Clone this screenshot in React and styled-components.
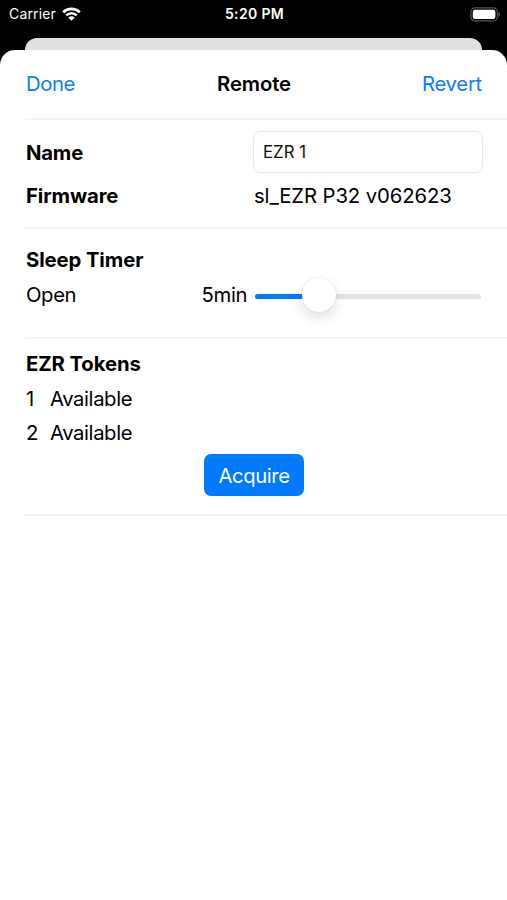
import React, { useState } from "react";
import styled, { createGlobalStyle } from "styled-components";

const GlobalStyle = createGlobalStyle`
* {
    box-sizing: border-box;
}
body {
    margin: 0;
    background: #000;
    font-family: Inter, "Liberation Sans", sans-serif;
}
`;

const Screen = styled.div`
width: 507px;
height: 900px;
display: flex;
flex-direction: column;
background: #000;
overflow: hidden;
`;

const StatusBar = styled.div`
height: 38px;
padding: 0 7px 11px 9px;
display: grid;
grid-template-columns: 1fr auto 1fr;
align-items: center;
color: #fff;
`;

const Carrier = styled.div`
display: flex;
align-items: center;
gap: 6px;
`;

const Battery = styled.div`
display: flex;
justify-content: flex-end;
`;

const BackSheet = styled.div`
height: 12px;
margin: 0 25px;
background: #e0e0e0;
border-radius: 12px 12px 0 0;
`;

const Sheet = styled.main`
flex: 1;
background: #fff;
border-radius: 15px 15px 0 0;
`;

const Text = styled.span`
font-size: ${({ $size }) => $size || 20.3}px;
font-weight: ${({ $weight }) => $weight || 400};
letter-spacing: ${({ $spacing }) => $spacing || 0}px;
line-height: 28px;
white-space: nowrap;
`;

const Header = styled.header`
height: 68px;
padding: 0 25px 0 26px;
display: grid;
grid-template-columns: 1fr auto 1fr;
align-items: center;
`;

const LinkButton = styled.button`
padding: 0;
border: none;
background: none;
color: #0a7cff;
font-family: inherit;
cursor: pointer;
justify-self: ${({ $end }) => ($end ? "end" : "start")};
`;

const Section = styled.section`
height: ${({ $height }) => $height}px;
margin-left: 25px;
padding: ${({ $top }) => $top}px 24px 0 1px;
border-top: 2px solid #f3f3f3;
`;

const FieldRow = styled.div`
height: ${({ $height }) => $height}px;
display: grid;
grid-template-columns: 228px 229px;
align-items: center;
`;

const NameInput = styled.input`
width: 230px;
height: 42px;
margin: -2px 0 0 -1px;
padding: 1px 8px 0 9px;
border: 1px solid #e9e9e9;
border-radius: 7px;
background: #fff;
color: #111;
font-family: inherit;
font-size: 16.8px;
letter-spacing: 0;
outline: none;
`;

const TimerRow = styled.div`
height: 34px;
margin-top: 4px;
padding-right: 2px;
display: grid;
grid-template-columns: 1fr auto 226px;
column-gap: 8px;
align-items: center;
`;

const Track = styled.div`
height: 5px;
margin-top: 2px;
border-radius: 3px;
background: #e3e3e4;
position: relative;
`;

const Fill = styled.div`
height: 100%;
border-radius: 3px;
background: #007aff;
`;

const Thumb = styled.div`
position: absolute;
top: -16px;
width: 34px;
height: 34px;
margin-left: -17px;
border-radius: 50%;
background: #fff;
box-shadow: 0 6px 14px rgba(0, 0, 0, 0.12), 0 0 2px rgba(0, 0, 0, 0.12);
`;

const TokenList = styled.div`
padding-top: 4px;
`;

const TokenRow = styled.div`
height: 34px;
display: grid;
grid-template-columns: 24px 1fr;
align-items: center;
`;

const AcquireButton = styled.button`
display: block;
width: 100px;
height: 42px;
margin: 4px auto 0 178px;
padding: 1px 0 0;
border: none;
border-radius: 7px;
background: #007aff;
color: #fff;
font-family: inherit;
cursor: pointer;
`;

const WifiIcon = () => (
    <svg width="19" height="14" viewBox="0 0 19 14" fill="none" stroke="#fff">
        <path d="M1.2 5.2C5.9 0.7 13.1 0.7 17.8 5.2" strokeWidth="2.6" />
        <path d="M4.3 8.4C7.2 5.5 11.8 5.5 14.7 8.4" strokeWidth="2.4" />
        <path d="M9.5 13.8L6.3 10.6C8.2 8.9 10.8 8.9 12.7 10.6Z" fill="#fff" stroke="none" />
    </svg>
);

const BatteryIcon = () => (
    <svg width="30" height="15" viewBox="0 0 30 15">
        <rect x="0.9" y="0.9" width="26.4" height="13" rx="4" fill="none" stroke="#555" strokeWidth="1.2" />
        <rect x="2.8" y="2.8" width="22.6" height="9.2" rx="2.2" fill="#fff" />
        <path d="M28.5 5.2C30.2 5.8 30.2 9 28.5 9.6Z" fill="#666" />
    </svg>
);

const tokens = ["Available", "Available"];

const App = () => {
    const [name, setName] = useState("EZR 1");
    const minutes = 5;
    const position = 28.4; // percent along the track

    return (
        <Screen>
            <GlobalStyle />
            <StatusBar>
                <Carrier>
                    <Text $size={14} $spacing={0.15}>Carrier</Text>
                    <WifiIcon />
                </Carrier>
                <Text $size={14} $weight={600} $spacing={0.35}>5:20 PM</Text>
                <Battery><BatteryIcon /></Battery>
            </StatusBar>
            <BackSheet />
            <Sheet>
                <Header>
                    <LinkButton><Text $spacing={-0.4}>Done</Text></LinkButton>
                    <Text $weight={600} $spacing={-0.1}>Remote</Text>
                    <LinkButton $end><Text $spacing={-0.25}>Revert</Text></LinkButton>
                </Header>
                <Section $height={109} $top={11}>
                    <FieldRow $height={43}>
                        <Text $weight={700} $spacing={-0.2}>Name</Text>
                        <NameInput value={name} onChange={(e) => setName(e.target.value)} />
                    </FieldRow>
                    <FieldRow $height={43}>
                        <Text $weight={700} $spacing={-0.1}>Firmware</Text>
                        <Text $spacing={-0.1}>sl_EZR P32 v062623</Text>
                    </FieldRow>
                </Section>
                <Section $height={110} $top={17}>
                    <Text $weight={700} $spacing={-0.1}>Sleep Timer</Text>
                    <TimerRow>
                        <Text $spacing={-0.4}>Open</Text>
                        <Text $spacing={-0.4}>{minutes}min</Text>
                        <Track>
                            <Fill style={{ width: `${position}%` }} />
                            <Thumb style={{ left: `${position}%` }} />
                        </Track>
                    </TimerRow>
                </Section>
                <Section $height={177} $top={11}>
                    <Text $weight={700} $spacing={-0.1}>EZR Tokens</Text>
                    <TokenList>
                        {tokens.map((status, i) => (
                            <TokenRow key={i}>
                                <Text>{i + 1}</Text>
                                <Text $spacing={-0.4}>{status}</Text>
                            </TokenRow>
                        ))}
                    </TokenList>
                    <AcquireButton><Text $spacing={-0.4}>Acquire</Text></AcquireButton>
                </Section>
                <Section $height={2} $top={0} />
            </Sheet>
        </Screen>
    );
};

export default App;
